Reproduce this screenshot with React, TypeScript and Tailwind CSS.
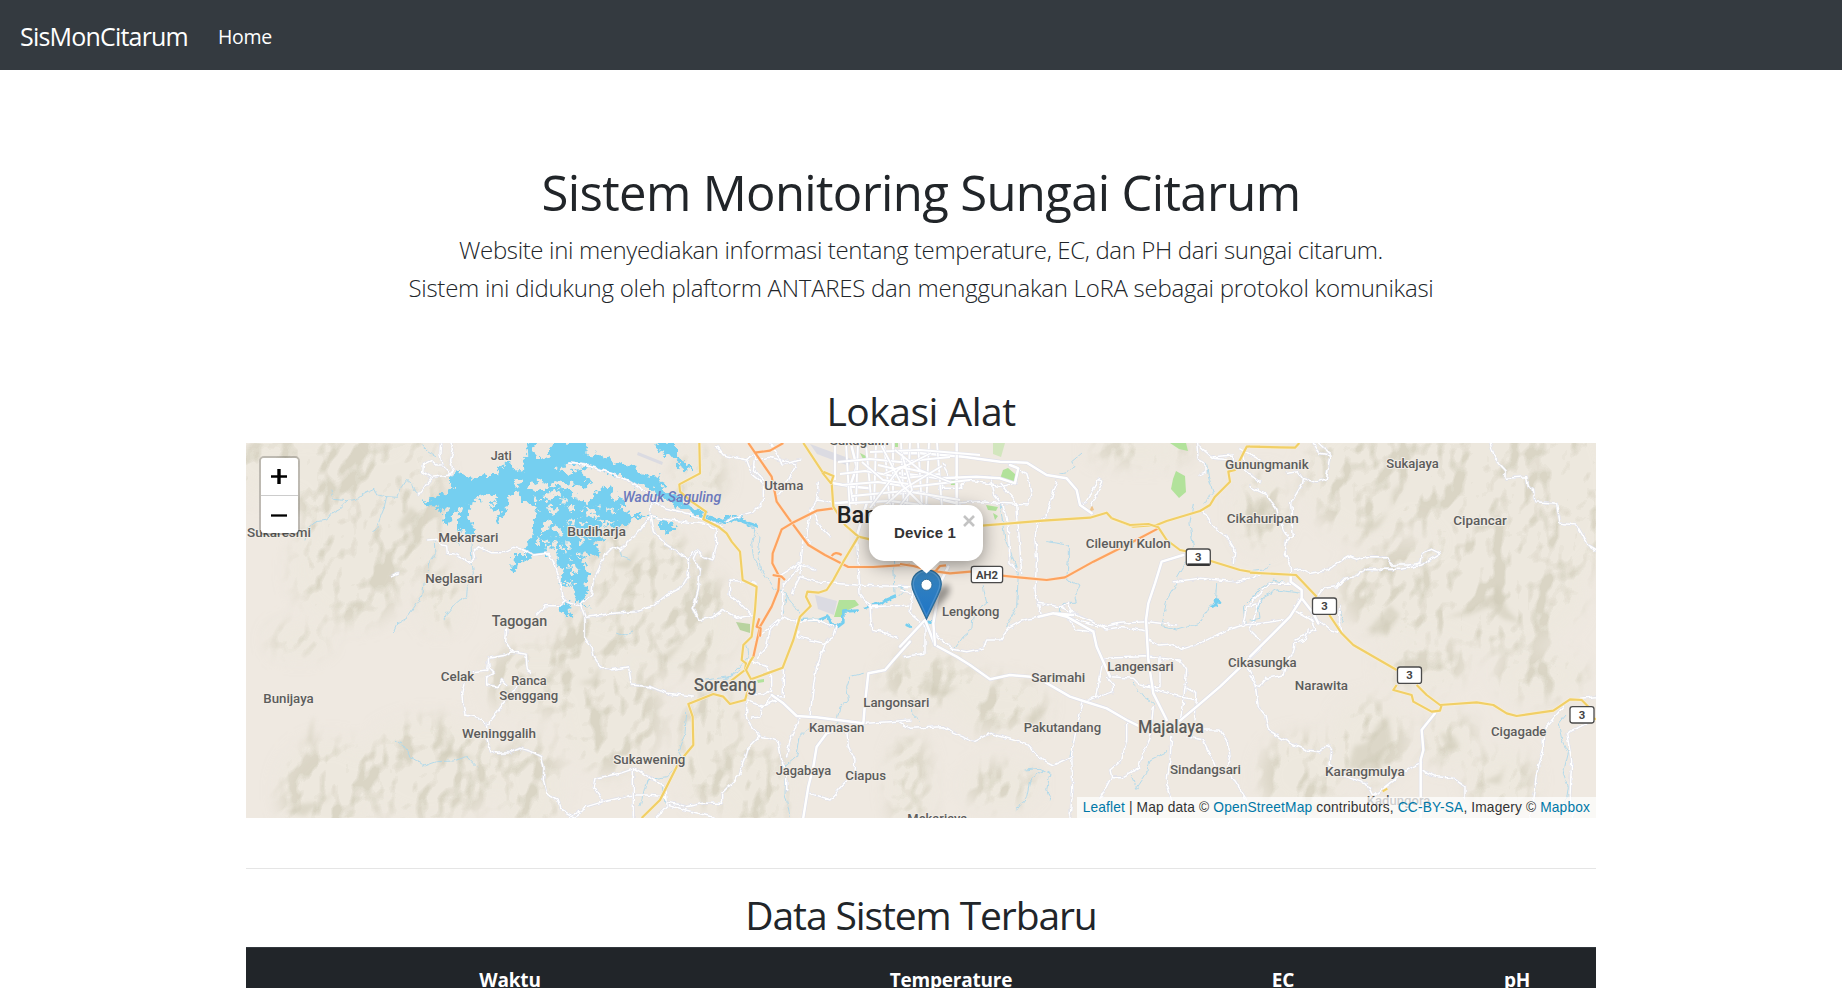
import React from "react";

type Tile = { x: number; minor: string[]; major: string[]; yellow: string[]; orange: string[]; streams: string[]; rivers: string[] };

const tiles: Tile[] = [
  {
    x: 240,
    minor: [
      "M602 9L600 40L606 75L590 75L575 62L550 75L548 95L575 112L550 145L535 165",
      "M575 112L630 105L640 95L632 60L640 30L630 9M606 75L630 100",
      "M563 300L590 298L605 315L620 318L622 340L645 342L665 352L690 370L703 355L700 335L715 320L750 338L790 338L820 322L850 330L880 345L925 340L940 365L952 405L965 440L968 470L978 482L1020 495",
      "M978 482L960 497L915 497L890 525",
      "M800 565L797 605L815 635L800 645L745 655L740 690L700 695M815 635L858 643L862 690L870 700",
      "M745 655L748 685L762 700L740 712L740 735L775 740L785 720L800 735",
      "M672 730L665 760L668 790L675 825L715 832L740 858L765 825L790 790L830 740",
      "M740 858L742 900L750 930L770 940L810 938L840 925L875 935L905 950L912 985L910 1020L920 1060L955 1080L965 1110L1005 1132L1020 1120",
      "M453 407L475 399",
    ],
    major: [],
    yellow: [],
    orange: [],
    streams: [
      "M273 150L280 178L320 182L350 178L375 158L402 145L410 165L440 170L470 172L478 150L500 118L515 130L520 150L535 165",
      "M325 182L300 205L280 215L260 240L230 245L205 260L195 300M440 170L432 205L422 230L410 265L395 275",
      "M583 305L585 345L570 365L565 395M552 430L548 465L520 505L500 535L470 552L460 575",
      "M693 300L695 355L700 400L682 440L680 470L650 485L620 520L612 540",
      "M545 15L570 38L590 48M468 900L490 915L510 950L555 978L590 965L640 963L680 950L710 982",
    ],
    rivers: [],
  },
  {
    x: 570,
    minor: [
      "M0 70L45 75L110 95L170 120L210 145L240 160L250 185L290 205L360 222L400 240L430 250L460 262",
      "M243 185L240 230L215 265L180 300L150 330L130 320L105 345L90 380L70 420L65 465L30 490L45 530L45 590L65 620L75 655L95 685L120 690L175 680L185 735L240 740L290 760L370 768",
      "M240 230L250 275L290 315L355 355L380 330L400 350L430 360L440 310L438 265L400 252L300 240L240 230",
      "M355 355L355 410L330 445L290 465L250 498L200 515L130 520L50 532M380 335L370 355L390 390L385 450L370 505L390 540L430 530L460 508L500 535L545 525",
      "M555 430L520 425L480 420L478 465L510 490L545 525M440 20L460 45L530 60L560 40M530 60L545 100L580 130L580 185L550 215L500 230L470 245M555 60L600 52L680 72L645 140L620 170",
      "M555 40L550 90L590 130M600 9L640 75L690 60M745 130L740 180L720 220L710 290L720 310M740 180L790 190M725 205L750 260L780 290M700 290L690 400M625 410L690 370L740 390M560 655L590 620L600 570L640 530L670 545L740 540L790 560",
      "M640 430L635 530M635 530L555 600M680 540L685 590L760 610L790 595L800 560M770 600L740 680L730 740L720 830",
      "M640 440L690 375L735 390M665 460L690 410L735 425L860 435L1020 440M860 300L870 460L900 500L905 570L950 580L985 595M900 500L1020 495",
      "M535 660L590 680L605 710L605 750L580 765L530 763M530 780L530 835L545 860L570 888L600 895L625 905L635 960L650 1000L650 1050",
      "M530 780L580 800L600 770L640 770M545 835L570 830L575 800L620 780M640 690L640 770",
      "M570 888L530 930L510 1000L480 1035L455 1060L455 1090L400 1090L350 1100L290 1085L285 1070L230 1065L190 1065L100 1085L70 1040L75 1015L150 1000L195 985L250 1020L285 1040L290 1100L260 1133",
      "M190 985L190 1132M100 1085L50 1100L0 1132M290 1095L430 1132",
      "M690 830L660 900L650 950M830 870L835 920L855 960L850 1010L825 1030L780 1080L720 1060M885 850L960 845L1020 840",
    ],
    major: ["M605 765L640 790L680 828L740 832L880 850L885 790L895 700L945 690L975 655L1020 605", "M820 865L770 880L740 920L730 980L715 1040L700 1132", "M790 130L850 140L900 145M845 20L860 80L840 140L850 185L790 190M890 190L860 290"],
    yellow: [
      "M388 9L390 100L328 133L330 155L365 185L408 215L400 238L445 260L470 280L485 305L510 335L518 420L560 440L555 510L545 590L520 615L515 660L528 670L525 690L480 725",
      "M700 9L760 100L785 130L790 200L825 255L865 290L900 298L1020 290",
      "M760 95L790 108L783 130L757 98M865 290L820 365L790 420L770 450L745 458L712 455L708 470L722 498L690 530L670 600L638 683L543 718L528 690L540 665L550 650",
      "M543 718L525 780L480 792L460 770L430 762L355 792L368 830L370 915L345 945L320 980L270 1080L215 1134",
    ],
    orange: ["M535 9L555 38L605 110L620 185L665 248L715 315L765 345L835 381L910 381L1020 374M555 38L600 32L640 9", "M790 205L740 212L665 250L635 268L608 340L607 370L628 410L625 450L605 500L570 560L550 650", "M785 348Q795 332 815 345M608 405L635 410L645 420M568 535L560 560L572 565L570 590"],
    streams: [
      "M455 240L500 235L555 265L545 310L550 350L575 400M150 330L155 350L180 360M140 580L165 588L190 575",
      "M550 260L570 290L565 340L575 390L610 440L650 460L640 520M650 470L675 500L690 520",
      "M525 605L535 650L480 710L410 720M510 690L460 720M350 820L345 880L325 930L340 960L290 1010L230 1020L220 1060L210 1100M275 1030L285 1090",
      "M880 700L840 710L830 740L835 780L810 800L800 850M720 860L690 890L680 950L650 975L645 1060L660 1130M860 60L870 20M970 350L975 460",
    ],
    rivers: ["M415 235L450 247L495 236L560 258", "M700 540L750 540L775 530L785 555L800 560L820 545L820 515L860 512", "M885 503L930 490L975 470", "M1010 555L1020 560"],
  },
  {
    x: 900,
    minor: [
      "M130 70L150 120L120 145L180 145L200 120L240 125L300 140L350 130M270 110L280 160L310 200L325 260L330 370L350 390",
      "M300 130L350 190L365 400M330 75L380 100L395 150L385 195L300 190L240 185L160 190M470 125L455 175L440 230L410 250L405 300L410 360L405 450L415 490",
      "M890 9L895 60L915 70L915 100L900 105M940 50L1000 45L1000 80M1030 50L1035 90L1080 125M900 20L940 55L990 60M1020 25L1080 60",
      "M550 200L595 118L608 125L575 195M440 230L420 250M0 450L40 460L75 500L80 540",
      "M415 490L425 530L370 540L325 565L300 600L260 600L250 625L200 635L160 628L130 605L105 580",
      "M415 490L480 500L520 520L505 540L530 570L580 575M480 500L505 490L515 515L580 545",
      "M520 520L570 540L610 560L660 550L740 545L830 555M510 535L620 567L660 562L740 572",
      "M745 600L780 615L815 612L845 628L900 610L940 590L980 570L1030 555L1080 550M610 655L730 650L840 660L860 690L855 740L845 840",
      "M610 655L600 710L590 770L555 785M620 710L640 735L640 755L595 770M630 710L700 715L720 735L840 770L890 780M735 740L780 740L780 650M855 740L890 760L885 840",
      "M550 785L530 860L515 940L518 1050L510 1132M680 850L680 900L665 960L630 990L635 1010L670 1010L715 985L730 940L750 895L760 800M635 1010L600 1075",
      "M860 890L910 900L945 980M900 870L960 870L985 910L990 950L980 990L1010 1030L1040 1080M815 890L810 960L800 1030L815 1080",
      "M0 850L30 865L130 860L160 880L220 905L270 880L340 900L385 915L420 955L460 975L515 950",
      "M820 425L900 415L1010 425L1060 410L1080 400M1000 370L1005 330L980 290L950 270L930 245L910 215M1080 490L1040 500L1030 550M1040 680L1060 710L1070 760",
      "M1080 480L1050 570L1080 600M40 445L30 520L75 560L75 640L10 650",
    ],
    major: [
      "M0 620L75 540M75 540L105 615L170 650L210 675L270 718L330 705L410 712L510 770L550 783L620 805L680 840L720 860",
      "M850 345L785 365L765 430L745 490L738 540L745 660L760 760L800 840",
      "M840 842L890 800L960 740L1080 625M0 40L60 40L190 50L300 65L380 68L440 105L500 115L530 150L540 195L575 220",
      "M145 380L120 430L100 550L105 615M460 520L500 530L580 575L590 620L630 710M415 530L460 520L520 525",
      "M0 160L60 155L130 180L170 190M0 100L120 115L230 110L300 115L345 130L355 85L330 75M170 9L170 230",
    ],
    yellow: [
      "M245 257L430 242L570 233L620 218L635 235L700 260L770 255L800 243L900 213L930 195L945 170L990 125L985 95L1005 90L1030 40L1040 20L1080 18",
      "M635 235L690 255L745 252L775 262L800 300L840 330L890 340M930 362L1020 390L1080 400",
    ],
    orange: ["M0 372L40 378L90 392L150 400L220 394M305 407L440 420L495 412L580 365L690 310L775 265M105 395L120 378L138 376"],
    streams: [
      "M545 40L515 65L525 80L500 95L480 100M440 305L505 315L505 360L500 420L540 435L525 470L530 490L485 490L480 520",
      "M300 190L315 300L330 330L355 400L350 500L320 560M250 440L260 490L220 520L215 570L190 590L165 625",
      "M880 190L870 250L880 320L865 350L830 410L830 430L800 480L785 560L830 570L900 550L925 500L950 480M950 430L945 500M1080 450L1030 500L1035 550",
      "M920 70L925 110L940 160L910 190M700 730L730 770L760 790M800 935L750 960L740 1000L710 1045L695 1010",
      "M375 990L420 985L450 1000L440 1050L450 1080M430 990L390 1020L380 1070L350 1110M540 830L525 880L510 950M0 470L20 450L0 440M35 780L35 820L55 840",
    ],
    rivers: ["M75 520L80 545L95 548M935 500L950 495L945 482L960 485"],
  },
  {
    x: 1250,
    minor: [
      "M190 9L210 40L240 45L230 115L200 128L160 115L158 130L122 190L130 290L110 300L105 340L120 370L122 400M0 140L50 165L80 210L100 270L115 295M160 115L145 95L110 100M205 9L240 40",
      "M720 9L735 55L765 90L765 115L830 110L835 140L850 150L855 185L920 190L930 250L980 255L1000 290L1015 315L1040 330",
      "M130 390L150 385L180 400L230 392L270 365L295 348L320 358L350 350L410 350L425 375L475 375L510 370L515 340L545 328L570 340L515 375L455 388L400 388L350 385L315 410L285 415L260 440L220 445L205 465",
      "M122 430L60 430L0 490M0 555L100 540M135 600L195 570L185 540L130 510L150 480M205 540L240 570L275 580M270 500L265 540L275 580",
      "M0 710L15 735L30 740L50 715L100 705L110 665L130 640L135 610L165 600L175 570M15 735L25 800L45 825L55 870L120 910L170 930L210 935L235 915L245 930L240 975L285 1010L350 1030L370 1070L440 1015L480 985L515 970",
      "M515 990L560 1010L610 1015L645 1040L645 1080M940 800L880 870L880 930L860 1000L840 1132M1040 770L990 775M1010 850L950 880L965 960L960 1070L970 1132",
    ],
    major: ["M122 405L122 425L155 450L155 475L190 520L205 550M155 475L120 530L0 650", "M555 820L515 870L520 930L512 960L512 1132"],
    yellow: [
      "M0 20L90 22L135 23L148 9M0 398L138 405L200 470M238 525L275 580L310 615L440 690M500 735L530 765L570 795L680 787L730 795L770 820L800 828L910 812L960 778L995 780L1015 800M440 735L430 750L485 765L490 785L545 815L570 812L575 795M1030 835L1040 838",
      "M398 1054L412 1046",
    ],
    orange: [],
    streams: ["M0 490L25 450L70 420L115 430M0 540L30 535L25 505L40 470L80 450L155 460M0 395L40 390L60 370M270 510L280 550M945 825L925 850L935 900L955 940L940 1000L955 1040L945 1110L930 1132"],
    rivers: [],
  },
];

const cityStreets = [
  "M835 480L835 443M846 443L850 512M858 443L856 505M866 445L872 508M876 443L874 506M884 443L890 505M893 443L893 507M901 443L904 510M910 443L907 505M918 443L922 508M929 443L926 510M937 443L942 508",
  "M838 462L870 459L900 462L950 457M840 474L865 471L905 478L940 474M842 485L878 482L910 487L970 480M852 496L905 491L960 500M850 503L890 501L930 506L960 514M870 452L920 450L980 455",
  "M880 443L902 485L925 508M942 466L902 490L882 508M895 450L920 470L950 482M862 462L883 480L908 484M902 454L912 490L899 507M870 508L898 470L931 453M878 465L895 469L913 463M884 474L900 467L928 473",
];

const hills: [number, number, number, number][] = [
  [280, 465, 55, 34], [345, 490, 50, 70], [410, 500, 34, 76], [350, 570, 58, 55], [300, 640, 30, 16], [440, 600, 20, 30], [330, 790, 50, 50], [430, 770, 70, 52], [530, 785, 32, 48],
  [530, 680, 46, 34], [590, 660, 40, 50], [640, 570, 52, 50], [675, 620, 58, 56], [610, 715, 52, 58], [700, 475, 24, 26], [710, 745, 34, 62], [755, 790, 34, 45],
  [930, 680, 48, 26], [1000, 705, 46, 26], [1000, 785, 36, 22], [910, 785, 20, 50], [1140, 450, 50, 14], [1262, 510, 24, 38], [1370, 475, 66, 64], [1480, 480, 72, 80], [1565, 490, 50, 90],
  [1410, 590, 68, 48], [1500, 590, 84, 62], [1425, 665, 44, 22], [1540, 675, 46, 24], [1370, 740, 38, 42], [1450, 740, 26, 26], [1500, 780, 34, 30], [1300, 775, 40, 40],
];

const shades = [
  "M1390 510l-15 12l-20 3l14 4l-12 12l22 -14l18 -30l10 -20l-14 14zM1498 583l-8 14l-18 12l-28 9l25 -3l20 -8l14 12l18 4l-14 -14zM1380 721l-14 22l-12 3l-6 22l24 4l20 -30l-4 -26zM1440 733l14 2l6 12l-12 5zM1506 762l-6 12l-18 8l18 2zM398 525l12 -18l8 6l-14 18zM306 745l4 -18l4 -12l-2 25zM335 790l-10 12l-26 2l-14 8l20 4zM440 755l40 5l-20 -8l-18 -2zM935 505",
  "M925 675l14 14l20 -3l-14 10l-24 -4zM1033 712l-10 8l12 4l12 -16zM1275 505l-20 14l-10 -5l14 -16zM1390 605l-14 16l-10 10l22 2l12 -18zM700 560l12 -10l-4 20l-12 12zM640 545l-12 14l-20 6l22 4zM685 640l-20 14l-12 0l14 8zM600 665l-8 14l-14 4l20 3z",
];

const labels: [string, number, number, number, number?][] = [
  ["Jati", 490.7, 460, 21], ["Sukaresmi", 247, 537.3, 64], ["Mekarsari", 438.3, 542, 60], ["Neglasari", 425.3, 583, 57], ["Tagogan", 491.7, 625.6, 55.4, 15], ["Celak", 440.7, 680.6, 33.7],
  ["Ranca", 511.3, 684.6, 35.4], ["Senggang", 499.3, 700.3, 59], ["Bunijaya", 263.3, 703.3, 50.4], ["Weninggalih", 462, 738.3, 74], ["Budiharja", 567.3, 536, 58.7], ["Utama", 764.3, 490, 39],
  ["Sukagalih", 829.7, 444.8, 59], ["Soreang", 693.7, 691.3, 63, 17.5], ["Sukawening", 613.3, 763.7, 72], ["Kamasan", 809, 731.7, 55.4], ["Jagabaya", 775.7, 775.3, 55.4], ["Ciapus", 845.3, 779.6, 40.7],
  ["Langonsari", 863.3, 707.3, 66], ["Lengkong", 942, 615.6, 57.4], ["Cileunyi Kulon", 1085.7, 548, 85], ["Sarimahi", 1031.3, 682.3, 54], ["Langensari", 1107.3, 671, 66.4], ["Pakutandang", 1023.7, 732.3, 77.4],
  ["Majalaya", 1138, 733, 66, 17.5], ["Sindangsari", 1170, 773.7, 71], ["Mekarjaya", 907.3, 822.5, 60], ["Gunungmanik", 1225, 469.3, 83.7], ["Cikahuripan", 1226.7, 522.6, 72], ["Cikasungka", 1228, 667, 68.7],
  ["Narawita", 1294.7, 689.7, 53.4], ["Sukajaya", 1386.3, 467.6, 52.4], ["Cipancar", 1453.3, 525, 53.4], ["Cigagade", 1491, 736.3, 55.4], ["Karangmulya", 1325, 776.3, 79.7], ["Kadungora", 1366.7, 805, 63.7],
];

const shields: [string, number, number, number][] = [
  ["AH2", 971.3, 566.3, 31.3], ["3", 1186.3, 549, 24], ["3", 1312.5, 598, 24], ["3", 1397.5, 667, 24], ["3", 1570, 706.6, 24],
];

const LAKE =
  "M68 185L90 180L125 158L165 150L150 125L150 110L175 95L200 115L230 118L250 105L285 105L300 85L325 60L345 90L370 95L365 60L385 40L380 5L405 5L400 35L420 60L440 55L450 30L468 5L555 5L560 40L600 45L640 65L700 80L730 105L775 110L795 150L830 170L860 195L900 210L925 225L960 238L1000 230L1050 243L1048 252L1000 241L960 250L920 241L880 224L850 210L810 185L780 172L760 146L710 135L650 105L590 88L520 74L490 78L470 90L500 100L545 88L550 115L575 125L560 140L510 130L470 120L445 135L480 145L520 152L530 180L570 190L580 160L620 140L650 145L625 170L640 175L670 180L680 190L655 208L700 225L745 224L745 233L700 235L690 250L660 265L600 262L612 300L580 305L600 340L570 350L560 330L545 360L570 400L555 430L565 465L545 492L525 485L522 440L490 440L475 415L490 400L470 370L470 330L478 300L455 290L462 330L440 320L440 345L400 345L365 325L385 310L400 280L398 250L415 215L400 195L360 180L350 150L330 165L320 200L295 250L285 245L300 215L270 200L300 170L255 165L230 180L205 200L210 240L228 280L215 305L190 262L175 315L180 260L170 245L190 200L165 210L150 240L135 255L130 235L145 205L115 210L112 197L75 195Z";
const LAKE_PARTS =
  "M345 342L395 342L382 360L355 370L350 397L335 385ZM478 505L495 485L515 490L505 505L515 535L490 522ZM553 485L570 512L556 498ZM755 226L800 242L838 265L795 275L775 248ZM765 5L825 5L825 35L850 65L880 80L848 102L835 70L815 45L785 40Z";
const ISLANDS =
  "M380 140L420 122L450 138L430 150L400 152ZM430 165L470 152L485 165L440 182ZM440 198L475 205L455 222ZM500 200L522 188L515 218ZM545 205L600 222L575 238ZM430 250L455 240L450 270L422 280ZM462 265L488 258L490 285L470 280ZM495 245L518 236L522 260ZM505 300L520 320L505 335ZM535 285L552 312L540 325ZM505 370L530 380L525 405L510 390ZM615 200L650 212L630 224ZM590 240L650 248L620 258ZM480 182L498 176L492 195ZM405 290L425 300L412 318ZM340 120L362 108L366 132L348 140ZM500 345L515 350L508 362ZM400 165L425 178L410 190ZM535 240L560 250L540 262ZM560 290L585 285L575 300ZM430 300L445 305L436 318ZM580 200L605 195L600 206ZM485 310L495 330L487 345ZM530 340L545 345L535 360ZM500 425L512 420L508 440Z";

function Line({ d, color, width, casing, casingWidth }: { d: string; color: string; width: number; casing?: string; casingWidth?: number }) {
  return (
    <>
      {casing && <path d={d} stroke={casing} strokeWidth={casingWidth} />}
      <path d={d} stroke={color} strokeWidth={width} />
    </>
  );
}

function MapCanvas() {
  return (
    <svg viewBox="246 443 1350 375" className="block h-[375px] w-full" fontFamily='Roboto, "Liberation Sans", sans-serif'>
      <defs>
        <filter id="relief" x="0" y="0" width="100%" height="100%" colorInterpolationFilters="sRGB">
          <feTurbulence type="fractalNoise" baseFrequency="0.026 0.021" numOctaves="3" seed="11" result="n" />
          <feDiffuseLighting in="n" surfaceScale="15" lightingColor="#fff" result="l">
            <feDistantLight azimuth="215" elevation="50" />
          </feDiffuseLighting>
          <feColorMatrix in="l" type="matrix" values="0 0 0 0 0.80  0 0 0 0 0.785  0 0 0 0 0.705  -2.2 0 0 0 1.72" result="s" />
          <feComponentTransfer in="s">
            <feFuncA type="discrete" tableValues="0 0.13 0.24 0.3 0.38 0.5 0.6" />
          </feComponentTransfer>
        </filter>
        <filter id="soft" x="-20%" y="-20%" width="140%" height="140%"><feGaussianBlur stdDeviation="9" /></filter>
        <filter id="softer"><feGaussianBlur stdDeviation="2" /></filter>
        <filter id="rough" x="-5%" y="-5%" width="110%" height="110%">
          <feTurbulence type="fractalNoise" baseFrequency="0.055" numOctaves="3" seed="4" />
          <feDisplacementMap in="SourceGraphic" scale="40" xChannelSelector="R" yChannelSelector="G" />
        </filter>
        <filter id="wiggle" filterUnits="userSpaceOnUse" x="-10" y="-10" width="1100" height="1160">
          <feTurbulence type="fractalNoise" baseFrequency="0.05" numOctaves="2" seed="2" />
          <feDisplacementMap in="SourceGraphic" scale="14" xChannelSelector="R" yChannelSelector="G" />
        </filter>
        <mask id="highlands" maskUnits="userSpaceOnUse" x="246" y="443" width="1350" height="375">
          <g fill="#fff" filter="url(#soft)">
            {hills.map(([cx, cy, rx, ry], i) => <ellipse key={i} cx={cx} cy={cy} rx={rx} ry={ry} />)}
          </g>
        </mask>
      </defs>
      <rect x="246" y="443" width="1350" height="375" fill="#efe9e1" />
      <g mask="url(#highlands)">
        <rect x="246" y="443" width="1350" height="375" fill="#ebe7dc" opacity="0.5" />
        <rect x="246" y="443" width="1350" height="375" filter="url(#relief)" />
      </g>
      <g fill="#cfcab7" opacity="0.55" filter="url(#softer)">{shades.map((d) => <path key={d} d={d} />)}</g>

      <g fill="#b2e29b">
        <path d="M839 600h16l4 5l-13 6l-4 6h-8zM1003 470l5 -2l7 6l3 4l-4 7l-14 -6zM1176 471l9 5l1 16l-7 6l-8 -9l2 -10zM1170 443h16l2 8l-9 -2zM986 505l12 2l-2 4l-8 -1zM993 513l5 3l-3 4zM950 481l5 -1v5h-4zM757 680l7 -1v3l-6 1zM895 443h3v4h-3z" />
        <path d="M736 622l14 2v9l-10 -3z" fill="#b9d3a0" /><path d="M993 443h12l-4 14l-8 -3z" fill="#d2e6bd" /><path d="M860 453l8 4l-4 4z" />
      </g>
      <path d="M815 595l22 6l-3 14l-16 -6zM810 444l41 15l-2 7l-32 -12zM638 452l25 10l-1 3l-25 -10z" fill="#dbdbe2" />
      <path d="M1092 505l2 5l-5 2z" fill="#efc48b" />

      <g transform="translate(400 440) scale(0.33333)">
        <g filter="url(#rough)">
          <path d={LAKE + LAKE_PARTS} fill="#75cff0" />
          <path d={ISLANDS} fill="#efe9e1" />
        </g>
      </g>

      {tiles.map((t) => (
        <g key={t.x} transform={`translate(${t.x} 440) scale(0.33333)`} fill="none" strokeLinejoin="round" strokeLinecap="round">
          <g filter="url(#wiggle)">
            {t.streams.map((d) => <Line key={d} d={d} color="#a9d8ec" width={2.6} />)}
            {t.rivers.map((d) => <Line key={d} d={d} color="#75cff0" width={8} />)}
            {t.minor.map((d) => <Line key={d} d={d} color="#ffffff" width={4.4} casing="#dfe0ea" casingWidth={8} />)}
          </g>
          {t.major.map((d) => <Line key={d} d={d} color="#ffffff" width={7.5} casing="#dedfe9" casingWidth={11} />)}
        </g>
      ))}
      <g fill="none" strokeLinejoin="round">
        {cityStreets.map((d) => <Line key={d} d={d} color="#ffffff" width={1.8} casing="#e3e4ec" casingWidth={3} />)}
      </g>
      {tiles.map((t) => (
        <g key={t.x} transform={`translate(${t.x} 440) scale(0.33333)`} fill="none" strokeLinejoin="round">
          {t.orange.map((d) => <Line key={d} d={d} color="#fda35f" width={6.5} casing="#fbe6d2" casingWidth={10} />)}
          {t.yellow.map((d) => <Line key={d} d={d} color="#f1cf66" width={6.5} casing="#f9efd6" casingWidth={10} />)}
        </g>
      ))}

      <g fill="#5c5c5b" stroke="#f2ede6" strokeWidth="2" paintOrder="stroke" strokeLinejoin="round" fontWeight="500">
        {labels.map(([t, x, y, w, size]) => (
          <text key={t} x={x} y={y} fontSize={size ?? 13.2} textLength={w} lengthAdjust="spacingAndGlyphs">{t}</text>
        ))}
        <text x="836.7" y="523.3" fontSize="23.5" fill="#222">Bandung</text>
      </g>
      <text x="622.7" y="502.3" fontSize="14" fontStyle="italic" fontWeight="500" fill="#6b79bd" textLength="98.5" lengthAdjust="spacingAndGlyphs">Waduk Saguling</text>

      {shields.map(([t, x, y, w], i) => (
        <g key={i}>
          <rect x={x} y={y} width={w} height="16.4" rx="2.5" fill="#fff" stroke="#4a4a4a" strokeWidth="1.3" />
          <text x={x + w / 2} y={y + 12.2} fontSize="11.3" fontWeight="700" fill="#444" textAnchor="middle">{t}</text>
        </g>
      ))}
      <path d="M1187.5 564.6h22" stroke="#333" strokeWidth="2.4" />
    </svg>
  );
}

function ZoomControl() {
  return (
    <div className="absolute top-[12.5px] left-[12.5px] flex w-[41px] flex-col overflow-hidden rounded-[5px] border-[2.5px] border-black/20 bg-clip-padding">
      <button className="flex h-[38px] items-center justify-center border-b border-[#ccc] bg-white" aria-label="Zoom in">
        <svg width="16" height="16" viewBox="0 0 16 16"><path d="M0 8.5h16" stroke="#000" strokeWidth="2.3" /><path d="M8 1v15" stroke="#000" strokeWidth="3.4" /></svg>
      </button>
      <button className="flex h-[37px] items-center justify-center bg-white pt-px" aria-label="Zoom out">
        <svg width="16" height="16" viewBox="0 0 16 16"><path d="M0 8.5h16" stroke="#000" strokeWidth="2.3" /></svg>
      </button>
    </div>
  );
}

function Marker() {
  return (
    <svg className="absolute top-[126px] left-[665px]" width="60" height="52" viewBox="0 0 60 52">
      <defs>
        <linearGradient id="pin" x1="0" y1="0" x2="0" y2="1"><stop offset="0" stopColor="#3883bb" /><stop offset="1" stopColor="#1d75c8" /></linearGradient>
        <filter id="pinShadow" x="-30%" y="-30%" width="160%" height="160%"><feGaussianBlur stdDeviation="3" /></filter>
      </defs>
      <path d="M17 49L24 26Q32 12 38 17Q41 23 33 31Z" fill="#000" opacity="0.38" filter="url(#pinShadow)" />
      <path d="M15.5 .8C7 .8 .8 7.2 .8 15.2C.8 19.5 2.5 22.5 4.2 26.5L15.5 50L26.9 26.5C28.6 22.5 30.3 19.5 30.3 15.2C30.3 7.2 24 .8 15.5 .8Z" fill="url(#pin)" stroke="#2e6c97" strokeWidth="1.2" />
      <path d="M15.5 2.3C8 2.3 2.3 7.8 2.3 15.2C2.3 19 4 22 5.6 25.8L15.5 46.7L25.4 25.8C27 22 28.8 19 28.8 15.2C28.8 7.8 23 2.3 15.5 2.3Z" fill="none" stroke="#fff" strokeOpacity="0.14" strokeWidth="1.3" />
      <circle cx="15.5" cy="15.8" r="5.5" fill="#fff" stroke="#2e6c97" strokeWidth="0.9" />
    </svg>
  );
}

function Popup() {
  return (
    <div className="absolute top-[62px] left-[623px] flex w-[114px] flex-col items-center">
      <div className="relative flex h-14 w-full items-center justify-center rounded-[15px] bg-white font-['Liberation_Sans',sans-serif] text-[15px] font-bold tracking-[0.15px] text-[#333] shadow-[0_4px_18px_rgba(0,0,0,0.4)]">
        <span className="pr-0.5">Device 1</span>
        <svg className="absolute top-[9.5px] right-[8px]" width="12" height="12" viewBox="0 0 12 12"><path d="M1 1l10 10M11 1L1 11" stroke="#c3c3c3" strokeWidth="2.6" /></svg>
      </div>
      <svg className="relative -mt-px" width="30" height="14" viewBox="0 0 30 14"><path d="M0 0h30L15.5 13.5z" fill="#fff" /></svg>
    </div>
  );
}

function Attribution() {
  return (
    <div className="absolute right-0 bottom-0 flex h-[21px] items-center bg-white/70 px-[6px] pt-0.5 font-['Liberation_Sans',sans-serif] text-[13.75px] tracking-[0.145px] whitespace-pre text-[#333]">
      <a className="text-[#0078a8]">Leaflet</a> | Map data © <a className="text-[#0078a8]">OpenStreetMap</a> contributors, <a className="text-[#0078a8]">CC-BY-SA</a>, Imagery © <a className="text-[#0078a8]">Mapbox</a>
    </div>
  );
}

export default function App() {
  return (
    <div className="h-[988px] overflow-hidden bg-white font-['Open_Sans','Noto_Sans',sans-serif] text-[20px] text-[#212529]">
      <nav className="flex h-[70px] items-center bg-[#343a40] px-5 pt-1 text-white">
        <a className="pb-px text-[25px] tracking-[-0.8px]">SisMonCitarum</a>
        <a className="ml-[30px] text-[19.5px] tracking-[-0.3px]">Home</a>
      </nav>
      <main className="mx-auto w-[1350px] text-center">
        <header className="pt-[92px]">
          <h1 className="mb-[9px] text-[49px] leading-[60px] tracking-[-0.65px]">Sistem Monitoring Sungai Citarum</h1>
          <p className="text-[24px] leading-[37.5px] font-light tracking-[-0.26px]">
            <span className="tracking-[-0.36px]">Website ini menyediakan informasi tentang temperature, EC, dan PH dari sungai citarum.</span>
            <br />
            Sistem ini didukung oleh plaftorm ANTARES dan menggunakan LoRA sebagai protokol komunikasi
          </p>
        </header>
        <section className="pt-[81px]">
          <h2 className="mb-[8px] text-[39px] leading-[48px] tracking-[-0.5px]">Lokasi Alat</h2>
          <div className="relative h-[375px] overflow-hidden text-left">
            <MapCanvas />
            <Marker />
            <Popup />
            <ZoomControl />
            <Attribution />
          </div>
        </section>
        <hr className="mt-[50px] mb-[22px] border-t border-black/10" />
        <section>
          <h2 className="mb-[8px] text-[39px] leading-[48px] tracking-[-1.1px]">Data Sistem Terbaru</h2>
          <div className="grid grid-cols-[528px_354px_310px_158px] border-t border-[#32383e] bg-[#212529] pt-[17px] pb-4 text-[19px] leading-[30px] font-bold tracking-[-0.2px] text-white">
            <span>Waktu</span>
            <span>Temperature</span>
            <span>EC</span>
            <span>pH</span>
          </div>
        </section>
      </main>
    </div>
  );
}
